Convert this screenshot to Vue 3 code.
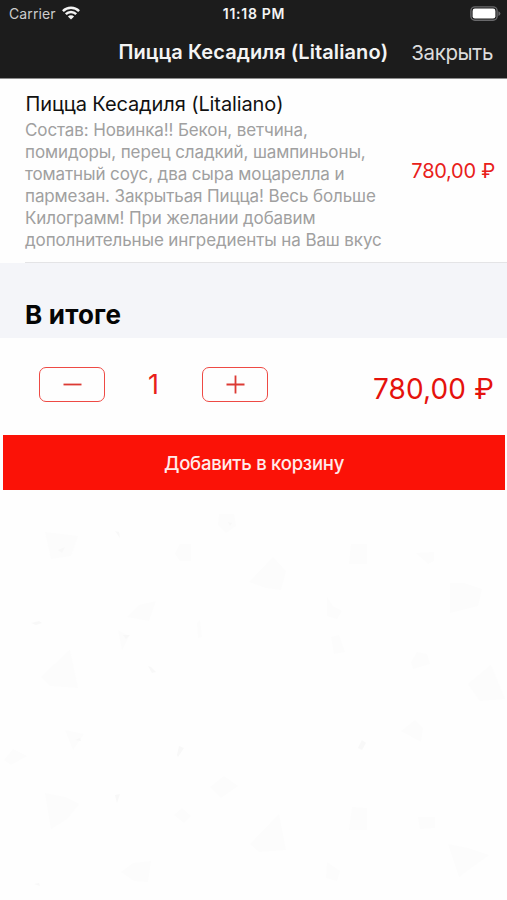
<template>
  <div class="page">
    <!-- статус-бар и навигация -->
    <header class="header">
      <div class="status-bar">
        <div class="status-left">
          <span class="carrier">Carrier</span>
          <svg class="wifi" viewBox="0 0 18 14" width="18" height="14">
            <path d="M.9 5.1a11.4 11.4 0 0 1 16.2 0" />
            <path d="M3.8 8.2a7.3 7.3 0 0 1 10.4 0" />
            <path class="fill" d="M9 13.6 5.9 10.5a4.4 4.4 0 0 1 6.2 0z" />
          </svg>
        </div>
        <span class="clock">11:18 PM</span>
        <div class="status-right">
          <svg viewBox="0 0 31 16" width="31" height="16">
            <rect x="0.9" y="0.9" width="26.2" height="13.4" rx="4" fill="none" stroke="#69696b" stroke-width="1.4" />
            <rect x="2.6" y="2.6" width="22.8" height="10" rx="2.3" fill="#fff" />
            <path d="M28.4 5.2q2 .8 2 2.4t-2 2.4z" fill="#69696b" />
          </svg>
        </div>
      </div>
      <div class="nav">
        <h1 class="nav-title">{{ product.title }}</h1>
        <button class="nav-close">Закрыть</button>
      </div>
    </header>

    <!-- товар -->
    <section class="product">
      <div class="product-info">
        <h2 class="product-title">{{ product.title }}</h2>
        <p class="product-desc">
          <span v-for="line in product.lines" :key="line">{{ line }}</span>
        </p>
      </div>
      <span class="product-price">{{ format(product.price) }}</span>
    </section>

    <div class="section-head">
      <h3>В итоге</h3>
    </div>

    <!-- количество и сумма -->
    <section class="total">
      <button class="step" @click="dec">
        <svg viewBox="0 0 20 20" width="20" height="20"><path d="M1.5 9.5h18" /></svg>
      </button>
      <span class="count">{{ count }}</span>
      <button class="step" @click="inc">
        <svg viewBox="0 0 20 20" width="20" height="20"><path d="M1.5 9.5h18M10.5 .5v18" /></svg>
      </button>
      <span class="total-price">{{ format(product.price * count) }}</span>
    </section>

    <button class="add">Добавить в корзину</button>

    <!-- бледный узор на фоне -->
    <svg class="pattern" viewBox="0 0 507 410" width="507" height="410">
      <path v-for="(d, i) in shapes" :key="i" :d="d" />
      <path v-for="(d, i) in specks" :key="'s' + i" class="speck" :d="d" />
    </svg>
  </div>
</template>

<script setup>
import { ref } from 'vue'

const product = {
  title: 'Пицца Кесадиля (Litaliano)',
  price: 780,
  lines: [
    'Состав: Новинка!! Бекон, ветчина,',
    'помидоры, перец сладкий, шампиньоны,',
    'томатный соус, два сыра моцарелла и',
    'пармезан. Закрытьая Пицца! Весь больше',
    'Килограмм! При желании добавим',
    'дополнительные ингредиенты на Ваш вкус'
  ]
}

const count = ref(1)

const shapes = [
  'M45 42l17 2 16 2-7 20-20 3z',
  'M219 24h15l2 12-10 7-8-8z',
  'M175 64l5-10h11v17h-11z',
  'M249 92l24-25 13 14-5 19-15-2z',
  'M351 54h16v20h-18z',
  'M416 63l18-1v9l-6 3z',
  'M450 93h14l18 6-4 17-28 7z',
  'M127 127l12-12 17-4-7 20z',
  'M327 107l6 9 9 5-5 8-10-3z',
  'M41 187l29-27 8 38-27-2z',
  'M331 147l8-2 6 17-11 2z',
  'M411 172l6-10 10 2 3 10-17 5z',
  'M468 194l23-19 14 34-25 2z',
  'M401 241l14-11 8 8-2 14z',
  'M65 240l19 4-11 16z',
  'M4 270l9-11 14 7-16 9z',
  'M210 297l14-11 14 10-17 12z',
  'M45 303l20 4 14 7-12 15-16 10z',
  'M174 325l8-7 9 8-7 7z',
  'M250 354l29-30 7 36-27 2z',
  'M352 317l15 1v22h-18z',
  'M418 327h17v11l-15 1z',
  'M448 354l20 4 21 7-21 15-9 7z',
  'M121 382l12-9 18-2-3 21-14-1z',
  'M327 372l13 9-3 10-11-3z',
  'M197 133l3-3 2 17-4 1z',
  'M118 140l11 6-7 14z'
]
const specks = [
  'M115 41l4 1 1 6z',
  'M31 133l8-2 3 2-6 2z',
  'M148 176l3 1 5 5-4 1z',
  'M358 258l4-8 4 3-4 7z',
  'M75 250l5-2 1 3z',
  'M179 256l5 2-6 9-1-2z',
  'M115 305l5-1-3 9z',
  'M34 394l5-1 1 3z',
  'M123 145l7 0-4 4z',
  'M58 60l7-3-3 6z',
  'M228 32l4 1-2 3z'
]

function format(sum) {
  return sum.toFixed(2).replace('.', ',') + ' ₽'
}

function inc() {
  count.value++
}

function dec() {
  if (count.value > 1) count.value--
}
</script>

<style>
body {
  margin: 0;
  background: #fefefe;
}
</style>

<style scoped>
.page {
  width: 507px;
  height: 900px;
  overflow: hidden;
  display: flex;
  flex-direction: column;
  background: #fefefe;
  font-family: Inter, 'Liberation Sans', sans-serif;
}
.page > * {
  flex: none;
  box-sizing: border-box;
}
h1,
h2,
h3,
p {
  margin: 0;
}
button {
  padding: 0;
  border: 0;
  background: none;
  font-family: inherit;
  cursor: pointer;
}
.header {
  height: 79px;
  border-bottom: 1px solid #8c8c8c;
  background: #1c1c1c;
  color: #f4f4f4;
}
.status-bar {
  display: grid;
  grid-template-columns: 1fr auto 1fr;
  align-items: center;
  height: 27px;
  padding: 0 6px 0 9px;
}
.status-left {
  display: flex;
  align-items: center;
  gap: 6px;
}
.carrier {
  font-size: 14px;
  letter-spacing: 0.1px;
  color: #ccc;
}
.wifi {
  margin-top: -2px;
  fill: none;
  stroke: #f4f4f4;
  stroke-width: 2.4;
}
.wifi .fill {
  fill: #f4f4f4;
  stroke: none;
}
.clock {
  margin-right: 2px;
  font-size: 14px;
  font-weight: 600;
  letter-spacing: 0.7px;
}
.status-right {
  display: flex;
  justify-content: flex-end;
}
.nav {
  display: flex;
  justify-content: flex-end;
  align-items: center;
  height: 50px;
  padding-right: 14px;
}
.nav-title {
  margin-right: 23px;
  font-size: 20px;
  font-weight: 600;
  letter-spacing: 0.08px;
  white-space: nowrap;
}
.nav-close {
  color: #dcdcdc;
  font-size: 20.5px;
  letter-spacing: -0.35px;
}
.product {
  display: flex;
  align-items: center;
  justify-content: space-between;
  height: 184px;
  margin-left: 25px;
  padding-right: 12px;
  border-bottom: 1px solid #e4e4e6;
}
.product-info {
  white-space: nowrap;
}
.product-title {
  padding: 0 0 2px 0.5px;
  color: #111;
  font-size: 20px;
  font-weight: 400;
  line-height: 26px;
  letter-spacing: -0.1px;
}
.product-desc {
  color: #a0a0a0;
  font-size: 17px;
  line-height: 22px;
  letter-spacing: -0.11px;
}
.product-desc span {
  display: block;
}
.product-price {
  color: #e8201a;
  font-size: 20px;
  letter-spacing: -0.25px;
  white-space: nowrap;
}
.section-head {
  height: 75px;
  padding: 0 25px;
  display: flex;
  align-items: flex-end;
  background: #f4f5f9;
}
.section-head h3 {
  color: #050505;
  font-size: 26px;
  font-weight: 700;
  line-height: 46px;
  letter-spacing: 0.2px;
}
.total {
  display: flex;
  align-items: center;
  height: 97px;
  padding: 0 13px 4px 39px;
}
.step {
  display: flex;
  align-items: center;
  justify-content: center;
  width: 66px;
  height: 35px;
  box-sizing: border-box;
  border: 1.5px solid #ee4a44;
  border-radius: 7px;
}
.step path {
  fill: none;
  stroke: #dc3a34;
  stroke-width: 1.8;
}
.count {
  width: 97px;
  text-align: center;
  color: #e8201a;
  font-size: 27px;
}
.total-price {
  margin-left: auto;
  padding-top: 8px;
  color: #e5120c;
  font-size: 28px;
  letter-spacing: 0.15px;
}
.add {
  height: 55px;
  margin: 0 2px 0 3px;
  background: #fb1207;
  color: #ffeceb;
  font-size: 18.5px;
  font-weight: 500;
  letter-spacing: -0.25px;
}
.pattern {
  fill: #fcfcfc;
}
.speck {
  fill: #f8f8f8;
}
</style>
